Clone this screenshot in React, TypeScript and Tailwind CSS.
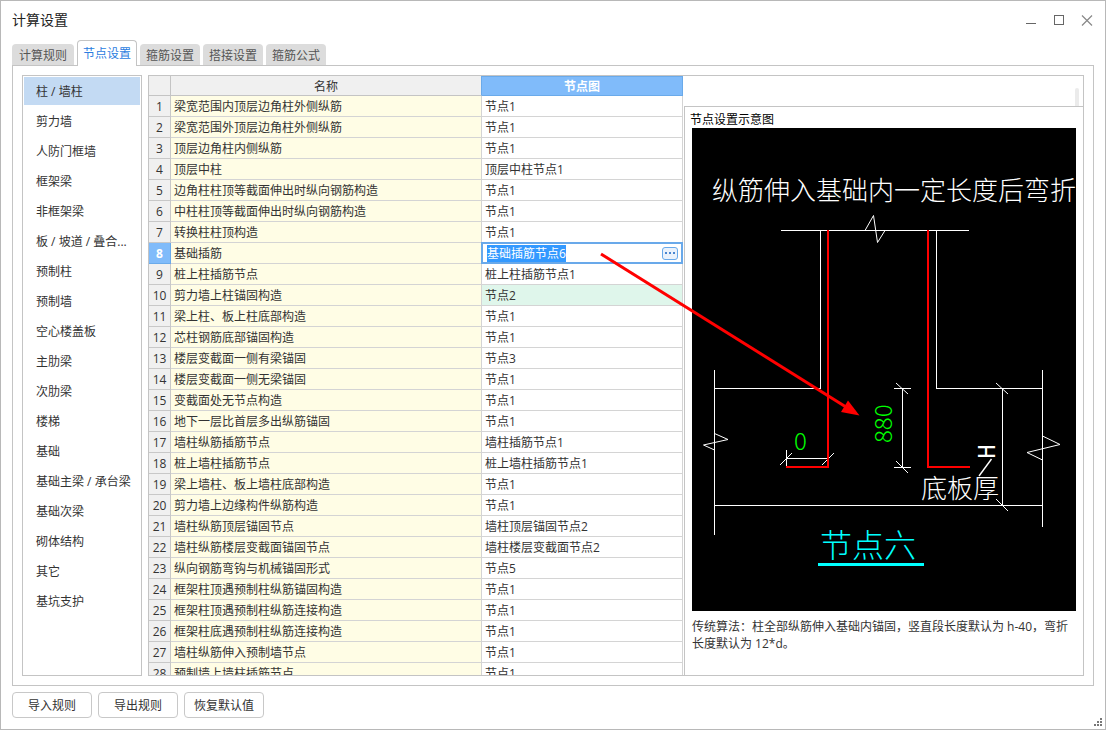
import { useEffect, useRef } from "react";

const tabs = ["计算规则", "节点设置", "箍筋设置", "搭接设置", "箍筋公式"];

const categories = [
  "柱 / 墙柱",
  "剪力墙",
  "人防门框墙",
  "框架梁",
  "非框架梁",
  "板 / 坡道 / 叠合...",
  "预制柱",
  "预制墙",
  "空心楼盖板",
  "主肋梁",
  "次肋梁",
  "楼梯",
  "基础",
  "基础主梁 / 承台梁",
  "基础次梁",
  "砌体结构",
  "其它",
  "基坑支护",
];

const rows: [string, string][] = [
  ["梁宽范围内顶层边角柱外侧纵筋", "节点1"],
  ["梁宽范围外顶层边角柱外侧纵筋", "节点1"],
  ["顶层边角柱内侧纵筋", "节点1"],
  ["顶层中柱", "顶层中柱节点1"],
  ["边角柱柱顶等截面伸出时纵向钢筋构造", "节点1"],
  ["中柱柱顶等截面伸出时纵向钢筋构造", "节点1"],
  ["转换柱柱顶构造", "节点1"],
  ["基础插筋", "基础插筋节点6"],
  ["桩上柱插筋节点", "桩上柱插筋节点1"],
  ["剪力墙上柱锚固构造", "节点2"],
  ["梁上柱、板上柱底部构造", "节点1"],
  ["芯柱钢筋底部锚固构造", "节点1"],
  ["楼层变截面一侧有梁锚固", "节点3"],
  ["楼层变截面一侧无梁锚固", "节点1"],
  ["变截面处无节点构造", "节点1"],
  ["地下一层比首层多出纵筋锚固", "节点1"],
  ["墙柱纵筋插筋节点", "墙柱插筋节点1"],
  ["桩上墙柱插筋节点", "桩上墙柱插筋节点1"],
  ["梁上墙柱、板上墙柱底部构造", "节点1"],
  ["剪力墙上边缘构件纵筋构造", "节点1"],
  ["墙柱纵筋顶层锚固节点", "墙柱顶层锚固节点2"],
  ["墙柱纵筋楼层变截面锚固节点", "墙柱楼层变截面节点2"],
  ["纵向钢筋弯钩与机械锚固形式", "节点5"],
  ["框架柱顶遇预制柱纵筋锚固构造", "节点1"],
  ["框架柱顶遇预制柱纵筋连接构造", "节点1"],
  ["框架柱底遇预制柱纵筋连接构造", "节点1"],
  ["墙柱纵筋伸入预制墙节点", "节点1"],
  ["预制墙上墙柱插筋节点", "节点1"],
];

const EDITING = 7;
const CHANGED = 9;

function TitleBar() {
  return (
    <header className="flex h-[39px] shrink-0 items-center justify-between pl-[11px] pr-3">
      <h1 className="pb-0.5 text-sm text-[#222]">计算设置</h1>
      <div className="flex gap-4">
        <button aria-label="最小化">
          <svg width="12" height="12" viewBox="0 0 12 12" stroke="#666" shapeRendering="crispEdges">
            <path d="M1 8.5h10" />
          </svg>
        </button>
        <button aria-label="最大化">
          <svg width="12" height="12" viewBox="0 0 12 12" stroke="#666" fill="none" shapeRendering="crispEdges">
            <path d="M1.5 .5h9v9h-9z" />
          </svg>
        </button>
        <button aria-label="关闭">
          <svg width="12" height="12" viewBox="0 0 12 12" stroke="#888" strokeWidth="1.2">
            <path d="M1 .5l10 10M11 .5L1 10.5" />
          </svg>
        </button>
      </div>
    </header>
  );
}

function Tabs() {
  return (
    <div role="tablist" className="relative -mb-px ml-[11px] flex h-[26px] shrink-0 items-end gap-[3px]">
      {tabs.map((tab, i) =>
        i === 1 ? (
          <button
            key={tab}
            role="tab"
            aria-selected="true"
            className="h-[26px] rounded-t border border-b-0 border-[#c4c4c4] bg-white px-[5px] pt-px text-[#2b7de0]"
          >
            {tab}
          </button>
        ) : (
          <button
            key={tab}
            role="tab"
            aria-selected="false"
            className="mb-px h-[21px] rounded-t bg-[#dcdcdc] px-1.5 pt-0.5 text-[#555] first:px-[7px]"
          >
            {tab}
          </button>
        ),
      )}
    </div>
  );
}

function Sidebar() {
  return (
    <nav className="w-[120px] shrink-0 overflow-hidden border border-[#c4c4c4] px-px">
      {categories.map((name, i) => (
        <div key={name} className="py-px">
          <button
            className={
              i === 0
                ? "block h-7 w-full bg-[#c3daf3] pt-0.5 pl-3 text-left whitespace-nowrap"
                : "block h-7 w-full pt-0.5 pl-3 text-left whitespace-nowrap"
            }
          >
            {name}
          </button>
        </div>
      ))}
    </nav>
  );
}

function NodeEditor({ value }: { value: string }) {
  const ref = useRef<HTMLInputElement>(null);
  useEffect(() => {
    ref.current?.focus();
    ref.current?.select();
  }, []);
  return (
    <div className="flex h-[22px] items-center border-2 border-[#69a9ea] bg-white pl-1 pr-[3px]">
      <input
        ref={ref}
        aria-label="节点图"
        defaultValue={value}
        className="h-[17px] min-w-0 flex-1 leading-[17px] outline-none selection:bg-[#3399ff] selection:text-white"
      />
      <button
        aria-label="选择节点"
        className="flex h-[13px] w-4 items-center justify-center rounded-[3px] border border-[#69a9ea] bg-[#eaf2fc]"
      >
        <svg width="12" height="4" viewBox="0 0 12 4" fill="#4a86d0" shapeRendering="crispEdges">
          <path d="M1 1h2v2h-2zM5 1h2v2h-2zM9 1h2v2h-2z" />
        </svg>
      </button>
    </div>
  );
}

function NodeTable() {
  return (
    <div className="w-[534px] shrink-0 overflow-hidden">
      <table className="w-full table-fixed border-separate border-spacing-0">
        <colgroup>
          <col className="w-[22px]" />
          <col className="w-[311px]" />
          <col className="w-[201px]" />
        </colgroup>
        <thead>
          <tr className="h-5">
            <th className="border-r border-b border-[#c4c4c4] bg-[#f0f0f0] p-0" />
            <th className="border-r border-b border-[#c4c4c4] border-r-[#6aaaea] bg-[#f0f0f0] p-0 pt-0.5 font-normal">名称</th>
            <th className="border border-l-0 border-[#6aaaea] bg-[#80bbfa] p-0 pt-0.5 font-bold text-white">节点图</th>
          </tr>
        </thead>
        <tbody>
          {rows.map(([name, node], i) => (
            <tr key={name} className="h-[21px]">
              <th
                scope="row"
                className={
                  i === EDITING
                    ? "border-r border-b border-[#6aaaea] bg-[#80bbfa] p-0 pt-0.5 font-bold text-white"
                    : "border-r border-b border-[#c8c8c8] bg-[#f0f0f0] p-0 pt-0.5 font-normal"
                }
              >
                {i + 1}
              </th>
              <td className="border-r border-b border-[#d4d4d4] bg-[#fffde5] pt-0.5 pr-0 pb-0 pl-[3px]">{name}</td>
              {i === EDITING ? (
                <td className="relative p-0">
                  <div className="absolute -top-px right-0 -left-px">
                    <NodeEditor value={node} />
                  </div>
                </td>
              ) : (
                <td
                  className={
                    i === CHANGED
                      ? "border-r border-b border-[#d4d4d4] bg-[#dff6eb] pt-0.5 pr-0 pb-0 pl-[3px]"
                      : "border-r border-b border-[#d4d4d4] pt-0.5 pr-0 pb-0 pl-[3px]"
                  }
                >
                  {node}
                </td>
              )}
            </tr>
          ))}
        </tbody>
      </table>
    </div>
  );
}

function NodeDiagram() {
  return (
    <svg
      viewBox="692 128 384 483"
      className="block w-full bg-black font-['Noto_Sans_CJK_SC',sans-serif] font-light"
      role="img"
      aria-label="节点六"
    >
      <g stroke="#fff" fill="none">
        <path
          shapeRendering="crispEdges"
          d="M781 230.5H969M820.5 230V388.5H714M936.5 230V388.5H1042M714.5 370V535M1042.5 370V527M714 505.5H1042M902.5 388V467M894 388.5H911M894 467.5H911M1002.5 388V505M786 458.5H828M786.5 450V467"
        />
        <path d="M865 230.5L873.5 215.5L877.5 242.5L885 230.5M714.5 433.5L728 439.5L703.5 445L714.5 450M1042.5 436L1060 444.5L1027 452.5L1042.5 460" />
        <path d="M896 383L908 394M896 461L908 473M996 383L1008 394M996 499L1008 511M780 465L792 453M822 465L834 453" />
        <path d="M991.5 459L979 476" strokeWidth="1.4" />
      </g>
      <path d="M828 230V467H786M928 230V467H970" stroke="#f00" strokeWidth="2" fill="none" shapeRendering="crispEdges" />
      <g fill="#fff" fontSize="26">
        <text x="712" y="200">纵筋伸入基础内一定长度后弯折</text>
        <text x="921" y="498">底板厚</text>
        <text transform="translate(995 459) rotate(-90)" className="font-['Liberation_Mono',monospace]" fontSize="25">
          H
        </text>
      </g>
      <g fill="#0f0" fontSize="24">
        <text x="794" y="450">0</text>
        <text transform="translate(892 443) rotate(-90)">880</text>
      </g>
      <text x="820" y="557" fontSize="32" fill="#0ff">
        节点六
      </text>
      <path d="M818 564.5H924" stroke="#0ff" strokeWidth="3" />
    </svg>
  );
}

function Preview() {
  return (
    <section className="ml-px flex min-w-0 flex-1 flex-col">
      <div className="flex h-[30px] shrink-0 items-end justify-end pr-1">
        <div className="h-[18px] w-1 rounded-t-sm bg-[#ebebeb]" />
      </div>
      <div className="min-h-0 flex-1 overflow-hidden border-t border-l border-[#c4c4c4] px-[7px]">
        <h2 className="-ml-0.5 h-[21px] leading-[26px] text-black">节点设置示意图</h2>
        <NodeDiagram />
        <p className="mt-[7px] leading-[17px]">
          传统算法：柱全部纵筋伸入基础内锚固，竖直段长度默认为 h-40，弯折长度默认为 12*d。
        </p>
      </div>
    </section>
  );
}

function Arrow() {
  return (
    <svg
      className="pointer-events-none absolute top-[176px] left-[450px]"
      width="262"
      height="166"
      viewBox="599 252 262 166"
      aria-hidden="true"
    >
      <path d="M601 254L846 407" stroke="#f00" strokeWidth="3" />
      <path d="M859.5 415.5L848 400.5L841 412z" fill="#f00" />
    </svg>
  );
}

export default function App() {
  return (
    <div className="flex h-screen flex-col border border-[#b8b8b8] bg-white font-['Open_Sans','Noto_Sans_CJK_SC',sans-serif] text-xs text-[#333]">
      <TitleBar />
      <Tabs />
      <main className="mr-[11px] ml-[11px] flex min-h-0 flex-1 gap-1.5 border border-[#c4c4c4] p-[9px]">
        <Sidebar />
        <div className="relative flex min-w-0 flex-1 border border-[#c4c4c4]">
          <NodeTable />
          <Preview />
          <Arrow />
        </div>
      </main>
      <footer className="flex shrink-0 items-start justify-between pt-1.5 pl-[11px]">
        <div className="flex gap-1.5 pb-[11px]">
          {["导入规则", "导出规则", "恢复默认值"].map((label) => (
            <button key={label} className="h-[26px] w-20 rounded border border-[#c8c8c8] bg-white pt-0.5">
              {label}
            </button>
          ))}
        </div>
        <svg className="mr-0.5 mb-0.5 self-end" width="9" height="9" viewBox="0 0 9 9" fill="#777" shapeRendering="crispEdges">
          <path d="M6 0h2v2h-2zM3 3h2v2h-2zM6 3h2v2h-2zM0 6h2v2h-2zM3 6h2v2h-2zM6 6h2v2h-2z" />
        </svg>
      </footer>
    </div>
  );
}
